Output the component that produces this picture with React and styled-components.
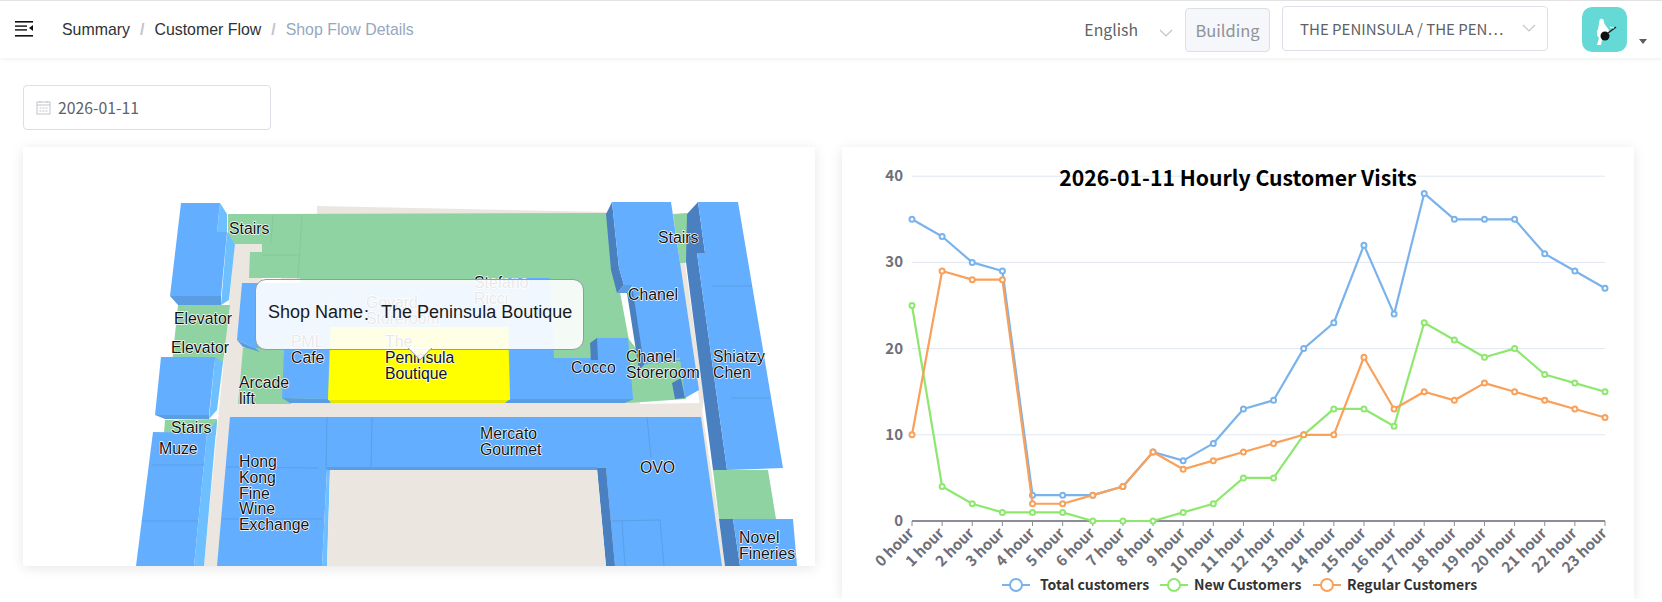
import React from 'react';
import styled, { createGlobalStyle } from 'styled-components';

const GlobalStyle = createGlobalStyle`
  html, body {
    margin: 0;
    padding: 0;
    background: #fff;
    font-family: "Liberation Sans", Arial, sans-serif;
  }
`;

const cjk = `"Noto Sans CJK SC", "Noto Sans", sans-serif`;

const Header = styled.header`
  height: 57px;
  border-top: 1px solid #e2e2e2;
  display: flex;
  align-items: center;
  box-shadow: 0 1px 4px rgba(0, 21, 41, 0.08);
  background: #fff;
`;

const MenuButton = styled.svg`
  width: 18px;
  height: 16px;
  margin-left: 15px;
  margin-right: 29px;
  margin-top: -1px;
  flex: none;
`;

const Crumbs = styled.nav`
  display: flex;
  align-items: center;
  font-size: 15.9px;
  line-height: 20px;
  margin-top: 1px;
`;

const Crumb = styled.span`
  color: ${(p) => (p.$current ? '#97a8be' : '#303133')};
`;

const Sep = styled.span`
  color: #c0c4cc;
  margin: 0 10px;
  font-weight: 700;
`;

const HeaderRight = styled.div`
  margin-left: auto;
  display: flex;
  align-items: center;
  padding-right: 15px;
`;

const Lang = styled.div`
  display: flex;
  align-items: center;
  font-family: ${cjk};
  font-size: 15.8px;
  color: #606266;
  margin-right: 12px;
`;

const Chevron = styled.svg`
  width: 14px;
  height: 8px;
  flex: none;
  margin-left: ${(p) => p.$gap}px;
  margin-top: ${(p) => p.$top}px;
`;

const Prepend = styled.div`
  width: 85px;
  height: 44px;
  box-sizing: border-box;
  border: 1px solid #dcdfe6;
  border-radius: 4px;
  background: #f5f7fa;
  color: #909399;
  font-family: ${cjk};
  font-size: 16.5px;
  display: flex;
  align-items: center;
  justify-content: center;
  margin-right: 12px;
`;

const Select = styled.div`
  width: 266px;
  height: 45px;
  box-sizing: border-box;
  border: 1px solid #dcdfe6;
  border-radius: 4px;
  display: flex;
  align-items: center;
  padding: 0 12px 0 17px;
  font-family: ${cjk};
  font-size: 15px;
  color: #606266;
  margin-right: 34px;
  margin-top: -2px;
`;

const SelectText = styled.span`
  width: 214px;
  flex: none;
  white-space: nowrap;
`;

const Avatar = styled.div`
  width: 45px;
  height: 45px;
  border-radius: 10px;
  background: #65d9d5;
  display: flex;
  align-items: center;
  justify-content: center;
`;

const Caret = styled.div`
  width: 0;
  height: 0;
  border-left: 4.5px solid transparent;
  border-right: 4.5px solid transparent;
  border-top: 5px solid #5a5e66;
  margin-left: 12px;
  margin-top: 23px;
`;

const Content = styled.main`
  padding: 27px 28px 0 23px;
`;

const DateBox = styled.div`
  width: 248px;
  height: 45px;
  box-sizing: border-box;
  border: 1px solid #dcdfe6;
  border-radius: 4px;
  display: flex;
  align-items: center;
  padding-left: 12px;
  gap: 7px;
  font-family: ${cjk};
  font-size: 15.8px;
  color: #606266;
`;

const Cards = styled.div`
  display: grid;
  grid-template-columns: 792px 792px;
  column-gap: 27px;
  align-items: start;
  margin-top: 17px;
`;

const Card = styled.section`
  position: relative;
  height: ${(p) => p.$height}px;
  background: #fff;
  box-shadow: 0 2px 12px 0 rgba(0, 0, 0, 0.1);
`;

const Drawing = styled.svg`
  display: block;
  width: 100%;
  height: 100%;
`;

const MapLabel = styled.text`
  font-family: "Liberation Sans", Arial, sans-serif;
  font-size: 15.8px;
  fill: #111;
  stroke: #fff;
  stroke-width: 1.3px;
  paint-order: stroke;
  stroke-linejoin: round;
`;

const Tooltip = styled.div`
  position: absolute;
  left: 232px;
  top: 132px;
  width: 329px;
  height: 71px;
  box-sizing: border-box;
  background: rgba(255, 255, 255, 0.9);
  border: 1px solid #999;
  border-radius: 11px;
  display: flex;
  align-items: center;
  padding: 0 0 4px 12px;
  font-size: 18px;
  color: #1a1a1a;
  white-space: nowrap;

  &::after {
    content: '';
    position: absolute;
    left: 155px;
    bottom: -8px;
    width: 18px;
    height: 18px;
    box-sizing: border-box;
    background: rgba(255, 255, 255, 0.9);
    border-right: 1px solid #999;
    border-bottom: 1px solid #999;
    transform: rotate(45deg);
    clip-path: polygon(100% 0, 100% 100%, 0 100%);
  }
`;

const Colon = styled.span`
  font-family: ${cjk};
  font-size: 14px;
  margin-right: 4px;
`;

const AxisText = styled.text`
  font-family: ${cjk};
  font-size: 15px;
  font-weight: 700;
  fill: #6e7079;
`;

const ChartTitle = styled.text`
  font-family: ${cjk};
  font-size: 21.2px;
  font-weight: 700;
  fill: #000;
`;

const LegendText = styled.text`
  font-family: ${cjk};
  font-size: 14px;
  font-weight: 700;
  fill: #333;
`;

// colours of the floor plan
const BLUE = '#63aeff';
const DARK = '#4a80bf';
const LIGHT = '#6dbfff';
const EDGE = '#5b9de2';
const GREEN = '#8fd3a2';
const FLOOR = '#ebe6e0';
const YELLOW = '#ffff00';

const shapes = [
  // floor
  [FLOOR, '317,206 606,212 607,215 317,215'],
  [FLOOR, '300,230 610,260 640,404 701,403 703,417 726,566 605,566 605,470 327,470 322,566 205,566 235,244 262,244 262,284 320,284 320,410 230,410'],
  [FLOOR, '235,244 262,244 262,254 250,254 248,284 243,300 243,404 330,404 330,417 230,417 217,566 204,566'],
  [FLOOR, '679,263 685,263 704,399 701,417 726,566 721,566 699,399'],
  // green areas
  [GREEN, '228,214 607,213 612,270 620,292 640,400 625,403 282,403 270,396 243,396 243,348 300,340 300,278 249,278 250,252 262,252 262,244 235,244 228,236'],
  [GREEN, '178,305 230,305 223,363 172,363'],
  [GREEN, '243,348 290,348 282,398 292,404 238,404'],
  [GREEN, '673,214 687,213 697,253 685,263 680,263'],
  [GREEN, '713,470 768,470 776,519 719,519'],
  [GREEN, '165,420 217,419 216,435 164,433'],
  [GREEN, '628,338 645,360 682,358 686,399 628,403'],
  // left block, upper
  [LIGHT, '220,203 227,214 227,232 217,232'],
  [LIGHT, '227,232 235,244 229,300 221,305'],
  [EDGE, '170,296 221,296 221,305 178,305'],
  [BLUE, '181,203 220,203 217,232 227,232 221,296 170,296'],
  // left block, middle
  [LIGHT, '215,357 223,362 217,410 209,419'],
  [EDGE, '155,415 209,415 209,419 165,419'],
  [BLUE, '161,357 215,357 209,415 155,415'],
  // Muze
  [LIGHT, '207,433 217,420 204,566 194,566'],
  [BLUE, '153,432 207,433 194,566 136,566'],
  // row of shops behind the yard
  [EDGE, '237,340 255,348 260,352 243,347'],
  [BLUE, '242,283 300,283 300,350 255,348 237,340'],
  [EDGE, '282,398 328,399 331,403 290,403'],
  [BLUE, '287,283 331,283 328,399 282,398'],
  [BLUE, '331,283 508,283 508,330 331,330'],
  [EDGE, '508,399 634,399 625,403 505,403'],
  [BLUE, '508,278 550,278 554,358 590,358 597,338 628,338 633,399 510,399'],
  [DARK, '590,343 597,338 598,360 591,360'],
  // The Peninsula Boutique
  ['#e6e600', '328,399 510,399 505,403 331,403'],
  [YELLOW, '331,327 508,327 510,400 328,400'],
  // Chanel
  [DARK, '606,214 612,202 619,268 624,285 617,293 611,270'],
  [EDGE, '617,293 624,285 633,285 627,293'],
  [DARK, '627,293 635,287 644,365 639,370'],
  [DARK, '672,383 681,378 685,398 675,399'],
  [BLUE, '612,202 671,202 699,390 685,398 680,358 644,365 632,285 624,285 619,268'],
  // Shiatzy Chen
  [DARK, '687,214 698,202 705,253 697,253 727,470 713,470 686,262'],
  [BLUE, '698,202 738,202 783,468 727,470 697,253 705,253'],
  // south block
  [BLUE, '230,417 701,417 722,566 615,566 606,469 327,469 322,566 217,566'],
  [EDGE, '327,467 597,467 597,470 327,470'],
  [DARK, '597,468 606,468 615,566 606,566'],
  [LIGHT, '327,470 330,470 327,566 322,566'],
  [FLOOR, '330,470 597,470 606,566 327,566'],
  // Novel Fineries
  [DARK, '719,519 733,519 740,566 725,566'],
  [BLUE, '733,519 793,519 797,566 740,566'],
];

// faint seams between the units
const seams = [
  '327,417 326,469', '372,417 371,469', '647,417 651,458', '226,467 318,468', '222,519 322,519',
  '152,465 204,465', '142,521 198,521', '612,521 660,520 664,566', '622,521 625,566',
  '712,286 752,286', '731,398 770,398', '656,363 682,360',
];

const greenSeams = ['273,215 271,243', '302,215 298,279', '262,255 300,255'];

const labels = [
  [229, [234], ['Stairs']],
  [174, [324], ['Elevator']],
  [171, [353], ['Elevator']],
  [239, [388, 404], ['Arcade', 'lift']],
  [291, [347, 363], ['PML', 'Cafe']],
  [366, [308, 324], ['Goyard', 'Storeroom']],
  [385, [347, 363, 379], ['The', 'Peninsula', 'Boutique']],
  [474, [288, 304], ['Stefano', 'Ricci']],
  [658, [243], ['Stairs']],
  [628, [300], ['Chanel']],
  [571, [373], ['Cocco']],
  [626, [362, 378], ['Chanel', 'Storeroom']],
  [713, [362, 378], ['Shiatzy', 'Chen']],
  [171, [433], ['Stairs']],
  [159, [454], ['Muze']],
  [239, [467, 483, 499, 514, 530], ['Hong', 'Kong', 'Fine', 'Wine', 'Exchange']],
  [480, [439, 455], ['Mercato', 'Gourmet']],
  [640, [473], ['OVO']],
  [739, [543, 559], ['Novel', 'Fineries']],
];

const series = [
  { name: 'Total customers', color: '#7ab3ec', legendX: 1002, textX: 1040, data: [35, 33, 30, 29, 3, 3, 3, 4, 8, 7, 9, 13, 14, 20, 23, 32, 24, 38, 35, 35, 35, 31, 29, 27] },
  { name: 'New Customers', color: '#8ee86f', legendX: 1160, textX: 1194, data: [25, 4, 2, 1, 1, 1, 0, 0, 0, 1, 2, 5, 5, 10, 13, 13, 11, 23, 21, 19, 20, 17, 16, 15] },
  { name: 'Regular Customers', color: '#f9a05a', legendX: 1313, textX: 1347, data: [10, 29, 28, 28, 2, 2, 3, 4, 8, 6, 7, 8, 9, 10, 10, 19, 13, 15, 14, 16, 15, 14, 13, 12] },
];

const X0 = 912;
const STEP = 693 / 23;
const Y0 = 521;
const UNIT = 8.62;
const px = (i) => X0 + i * STEP;
const py = (v) => Y0 - v * UNIT;

const FloorMap = () => (
  <Drawing viewBox="23 147 792 419">
    {shapes.map(([fill, points], i) => (
      <polygon key={i} fill={fill} points={points} />
    ))}
    {seams.map((points, i) => (
      <polyline key={i} points={points} fill="none" stroke="#5a9fe8" strokeWidth="1" />
    ))}
    {greenSeams.map((points, i) => (
      <polyline key={i} points={points} fill="none" stroke="#86c998" strokeWidth="1" />
    ))}
    {labels.map(([x, ys, lines], i) => (
      <React.Fragment key={i}>
        {lines.map((line, j) => (
          <MapLabel key={line + j} x={x} y={ys[j]}>{line}</MapLabel>
        ))}
      </React.Fragment>
    ))}
  </Drawing>
);

const Chart = () => (
  <Drawing viewBox="842 147 792 452">
    {[10, 20, 30, 40].map((v) => (
      <line key={v} x1={X0} x2={X0 + 693} y1={py(v)} y2={py(v)} stroke="#e0e6f1" strokeWidth="1" />
    ))}
    {[0, 10, 20, 30, 40].map((v) => (
      <AxisText key={v} x={903} y={py(v) + 5} textAnchor="end">{v}</AxisText>
    ))}
    <line x1={X0} x2={X0 + 693} y1={Y0} y2={Y0} stroke="#8c8d96" strokeWidth="2" />
    {Array.from({ length: 24 }, (_, i) => (
      <g key={i}>
        <line x1={px(i)} x2={px(i)} y1={Y0} y2={Y0 + 5} stroke="#8c8d96" />
        <AxisText x={px(i) + 3} y={Y0 + 13} textAnchor="end" transform={`rotate(-45 ${px(i) + 3} ${Y0 + 13})`}>
          {i} hour
        </AxisText>
      </g>
    ))}
    <ChartTitle x={1238} y={186} textAnchor="middle">2026-01-11 Hourly Customer Visits</ChartTitle>
    {series.map((s) => (
      <g key={s.name}>
        <polyline
          points={s.data.map((v, i) => `${px(i)},${py(v)}`).join(' ')}
          fill="none"
          stroke={s.color}
          strokeWidth="2.2"
          strokeLinejoin="round"
        />
        {s.data.map((v, i) => (
          <circle key={i} cx={px(i)} cy={py(v)} r="2.5" fill="#fff" stroke={s.color} strokeWidth="2" />
        ))}
      </g>
    ))}
    {series.map((s) => (
      <g key={s.name}>
        <line x1={s.legendX} x2={s.legendX + 28} y1={585} y2={585} stroke={s.color} strokeWidth="2" />
        <circle cx={s.legendX + 14} cy={585} r="6" fill="#fff" stroke={s.color} strokeWidth="2" />
        <LegendText x={s.textX} y={590}>{s.name}</LegendText>
      </g>
    ))}
  </Drawing>
);

export default function App() {
  return (
    <>
      <GlobalStyle />
      <Header>
        <MenuButton viewBox="0 0 18 16">
          <rect x="0" y="0" width="18" height="1.6" fill="#111" />
          <rect x="0" y="4.4" width="12" height="1.4" fill="#111" />
          <rect x="0" y="8.2" width="12" height="1.4" fill="#111" />
          <rect x="0" y="14" width="18" height="1.6" fill="#111" />
          <polygon points="18,4 14,7 18,10" fill="#111" />
        </MenuButton>
        <Crumbs>
          <Crumb>Summary</Crumb>
          <Sep>/</Sep>
          <Crumb>Customer Flow</Crumb>
          <Sep>/</Sep>
          <Crumb $current>Shop Flow Details</Crumb>
        </Crumbs>
        <HeaderRight>
          <Lang>
            English
            <Chevron viewBox="0 0 14 8" $gap={21} $top={6}>
              <path d="M1 1l6 6 6-6" fill="none" stroke="#c0c4cc" strokeWidth="1.2" />
            </Chevron>
          </Lang>
          <Prepend>Building</Prepend>
          <Select>
            <SelectText>THE PENINSULA / THE PEN…</SelectText>
            <Chevron viewBox="0 0 14 8" $gap={8} $top={-2}>
              <path d="M1 1l6 6 6-6" fill="none" stroke="#c0c4cc" strokeWidth="1.2" />
            </Chevron>
          </Select>
          <Avatar>
            <svg width="30" height="30" viewBox="0 0 30 30">
              <path d="M10 4c2-1 4 0 4 3 0 3 4 5 5 9 1 4-1 7-4 8l-3 1-1 5H7l2-7c-2-2-3-5-1-9 1-3 1-8 2-10z" fill="#fff" />
              <ellipse cx="15" cy="21" rx="4.5" ry="4.5" fill="#111" />
              <path d="M18 18l8-6" stroke="#222" strokeWidth="1.5" />
              <path d="M20 12l4 1" stroke="#fff" strokeWidth="1.2" />
            </svg>
          </Avatar>
          <Caret />
        </HeaderRight>
      </Header>
      <Content>
        <DateBox>
          <svg width="15" height="15" viewBox="0 0 15 15">
            <rect x="1" y="2" width="13" height="12" fill="none" stroke="#c0c4cc" />
            <path d="M1 5h13M4 1v2M11 1v2M3.5 8h2M6.5 8h2M9.5 8h2M3.5 11h2M6.5 11h2M9.5 11h2" stroke="#c0c4cc" fill="none" />
          </svg>
          2026-01-11
        </DateBox>
        <Cards>
          <Card $height={419}>
            <FloorMap />
            <Tooltip>Shop Name<Colon>：</Colon>The Peninsula Boutique</Tooltip>
          </Card>
          <Card $height={452}>
            <Chart />
          </Card>
        </Cards>
      </Content>
    </>
  );
}
